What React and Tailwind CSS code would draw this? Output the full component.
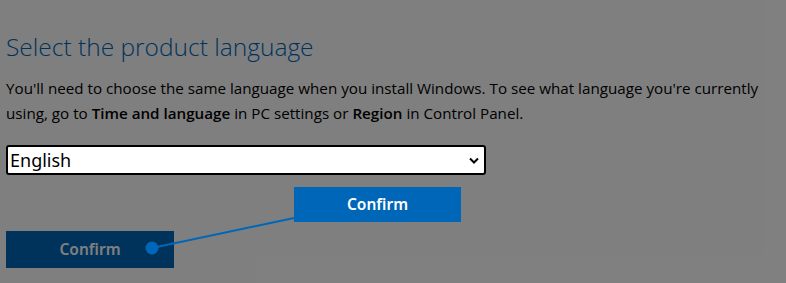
import React from 'react';

const App = () => {
  return (
    <div className="relative w-[786px] h-[283px] overflow-hidden bg-white" style={{ fontFamily: '"Open Sans", "Noto Sans", sans-serif' }}>
      {/* page content */}
      <div className="pl-[6px] pt-[30px]">
        <h1 className="text-[24.5px] leading-[34px] font-light text-[#0067b8]">Select the product language</h1>
        <p className="mt-[12px] w-[765px] text-[15.2px] leading-[25px] text-black">
          You'll need to choose the same language when you install Windows. To see what language you're currently using, go to <b className="font-semibold">Time and language</b> in PC settings or <b className="font-semibold">Region</b> in Control Panel.
        </p>
        <div className="h-[105px]" />
        <div className="w-[168px] h-[37px] bg-[#0067b8] text-white font-semibold text-[15.5px] flex items-center justify-center" style={{ fontFamily: '"Noto Sans", sans-serif' }}>Confirm</div>
      </div>

      {/* dim overlay */}
      <div className="absolute inset-0 bg-black/50" />

      {/* highlighted select */}
      <div className="absolute left-[6px] top-[145px] w-[480px] h-[30px] bg-white border-2 border-black rounded-[3px] flex items-center justify-between pl-[2px] pr-[5px]">
        <span className="text-[18px] text-black" style={{ fontFamily: '"Noto Sans", sans-serif' }}>English</span>
        <svg width="10" height="7" viewBox="0 0 10 7"><path d="M1 1.5 L5 5.5 L9 1.5" fill="none" stroke="black" strokeWidth="2" /></svg>
      </div>

      {/* callout */}
      <svg className="absolute inset-0" width="786" height="283">
        <line x1="152" y1="248" x2="294" y2="218" stroke="#0067b8" strokeWidth="2" />
        <circle cx="152" cy="248" r="6.5" fill="#0067b8" />
      </svg>
      <div className="absolute left-[294px] top-[187px] w-[167px] h-[35px] bg-[#0067b8] text-white font-semibold text-[15.5px] flex items-center justify-center" style={{ fontFamily: '"Noto Sans", sans-serif' }}>Confirm</div>
    </div>
  );
};

export default App;
